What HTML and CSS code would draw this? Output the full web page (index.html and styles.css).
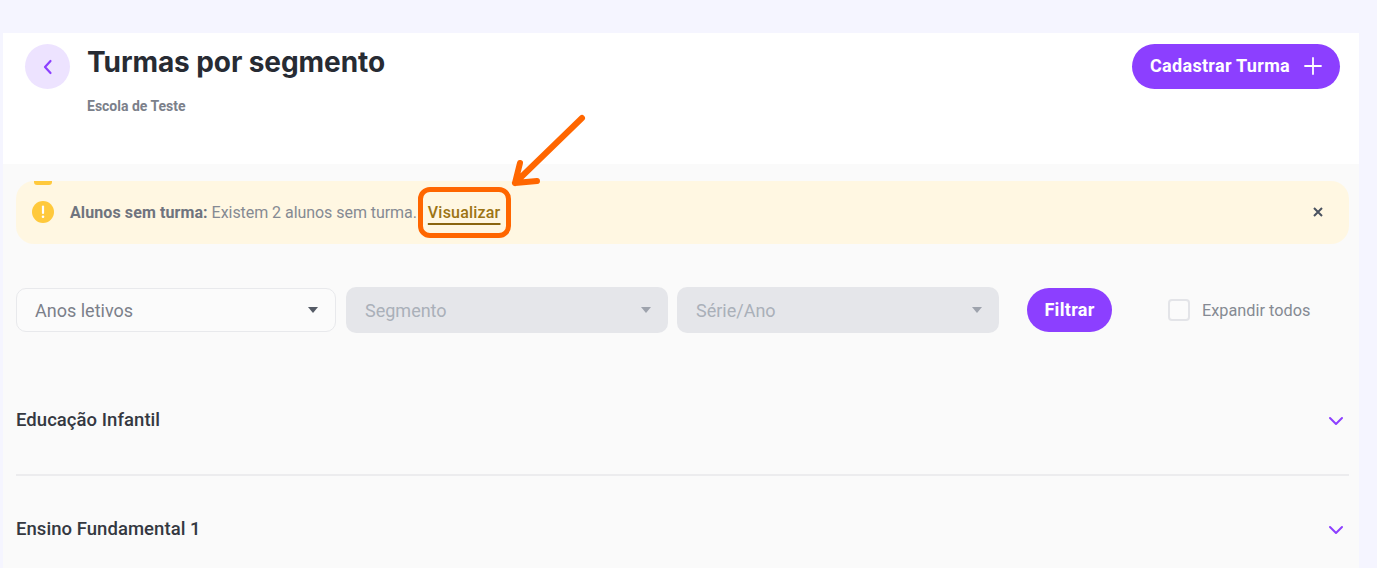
FILE: index.html
```html
<!DOCTYPE html>
<html lang="pt-BR">
<head>
<meta charset="utf-8">
<title>Turmas por segmento</title>
<link rel="stylesheet" href="styles.css">
</head>
<body>
<main class="shell">
  <header class="top">
    <div class="top-left">
      <button class="back" aria-label="Voltar">
        <svg width="12" height="16" viewBox="0 0 12 16"><path d="M8.5 2 L3 8 L8.5 14" fill="none" stroke="#8c3fff" stroke-width="2.2" stroke-linecap="round" stroke-linejoin="round"/></svg>
      </button>
      <div class="titles">
        <h1>Turmas por segmento</h1>
        <p>Escola de Teste</p>
      </div>
    </div>
    <button class="cta">Cadastrar Turma
      <svg width="18" height="18" viewBox="0 0 18 18"><path d="M9 1V17M1 9H17" stroke="#fff" stroke-width="1.8" stroke-linecap="round"/></svg>
    </button>
  </header>
  <section class="content">
    <div class="alert">
      <span class="alert-tab"></span>
      <svg class="alert-icon" width="22" height="22" viewBox="0 0 22 22"><circle cx="11" cy="11" r="11" fill="#ffc93c"/><path d="M11 5.5V12" stroke="#fff" stroke-width="2.2" stroke-linecap="round"/><circle cx="11" cy="15.8" r="1.3" fill="#fff"/></svg>
      <p class="alert-text"><strong>Alunos sem turma:</strong> Existem 2 alunos sem turma. <a class="alert-link" href="#">Visualizar</a></p>
      <svg class="alert-close" width="10" height="10" viewBox="0 0 10 10"><path d="M1 1L9 9M9 1L1 9" stroke="#4a5260" stroke-width="2"/></svg>
    </div>
    <div class="filters">
      <div class="select select-on"><span>Anos letivos</span><i class="caret"></i></div>
      <div class="select select-off"><span>Segmento</span><i class="caret"></i></div>
      <div class="select select-off select-last"><span>Série/Ano</span><i class="caret"></i></div>
      <button class="filter-btn">Filtrar</button>
      <label class="expand"><i class="box"></i>Expandir todos</label>
    </div>
    <div class="accordion">
      <div class="acc-row acc-first"><span>Educação Infantil</span><svg class="chev" width="16" height="10" viewBox="0 0 16 10"><path d="M2 2L8 8L14 2" fill="none" stroke="#8c3fff" stroke-width="2" stroke-linecap="round" stroke-linejoin="round"/></svg></div>
      <div class="acc-row"><span>Ensino Fundamental 1</span><svg class="chev" width="16" height="10" viewBox="0 0 16 10"><path d="M2 2L8 8L14 2" fill="none" stroke="#8c3fff" stroke-width="2" stroke-linecap="round" stroke-linejoin="round"/></svg></div>
    </div>
  </section>
</main>
<div class="mark-box"></div>
<svg class="mark-arrow" width="80" height="76" viewBox="0 0 80 76"><path d="M74 5L7 70M7 70L12 50M7 70L29 68" fill="none" stroke="#ff6600" stroke-width="6" stroke-linecap="round" stroke-linejoin="round"/></svg>
</body>
</html>
```
FILE: styles.css
```css
* { box-sizing: border-box; }
html, body { height: 100%; }
body {
  margin: 0;
  padding: 33px 18px 0 3px;
  background: #f5f5ff;
  font-family: Roboto, "Liberation Sans", sans-serif;
  overflow: hidden;
  position: relative;
}
.shell { background: #fafafa; height: 535px; overflow: hidden; }
.top {
  background: #fff;
  height: 131px;
  padding: 11px 19px 0 22px;
  display: flex;
  justify-content: space-between;
  align-items: flex-start;
}
.top-left { display: flex; gap: 17px; }
.back {
  width: 45px; height: 45px; border: 0; border-radius: 50%;
  background: #ede3ff; display: flex; align-items: center; justify-content: center; padding: 0;
}
.titles h1 {
  margin: 0; font-size: 28px; line-height: 36px; font-weight: 700; color: #272b33;
  font-family: Inter, Roboto, sans-serif; letter-spacing: -0.08px;
}
.titles p { margin: 18px 0 0; font-size: 14px; line-height: 17px; font-weight: 700; color: #7b808a; }
.cta {
  height: 45px; width: 208px; border: 0; border-radius: 23px; background: #8c3fff; color: #fff;
  font: 700 18px Roboto, sans-serif; letter-spacing: 0.3px; display: flex; align-items: center; justify-content: center; gap: 14px; padding: 0 0 2px;
}
.content { padding: 17px 10px 0 13px; }
.alert {
  position: relative; height: 63px; background: #fff7e2; border-radius: 18px;
  display: flex; align-items: center; padding: 0 26px 2px 16px; margin-bottom: 43px;
}
.alert-tab { position: absolute; left: 18px; top: 0; width: 18px; height: 4px; border-radius: 0 0 3px 3px; background: #ffc93c; }
.alert-text { margin: 0 0 0 16px; padding-top: 2px; flex: 1; font-size: 16px; color: #858a93; white-space: nowrap; letter-spacing: -0.05px; }
.alert-text strong { color: #6f747e; font-weight: 700; letter-spacing: 0.1px; }
.alert-link {
  color: #9c7413; font-weight: 500; margin-left: 7px; letter-spacing: 0.2px;
  text-decoration: underline; text-decoration-thickness: 2px; text-underline-offset: 5px; text-decoration-color: #8a6510;
}
.filters { display: flex; align-items: center; height: 46px; }
.select {
  height: 46px; border-radius: 10px; display: flex; align-items: center; justify-content: space-between;
  padding: 0 17px 0 19px; font-size: 18px;
}
.select-on { width: 320px; height: 44px; background: #fbfbfb; border: 1px solid #e8e9ec; color: #7b808a; padding-left: 18px; }
.select-off { width: 322px; margin-left: 10px; background: #e5e6ea; color: #aab0b9; }
.select-last { margin-left: 9px; }
.caret { width: 0; height: 0; border: 5px solid transparent; border-top: 6px solid #555b66; border-bottom: 0; }
.select-off .caret { border-top-color: #9ea3ad; }
.filter-btn {
  width: 85px; height: 44px; margin-left: 28px; margin-bottom: 1px; border: 0; border-radius: 22px; background: #8c3fff; color: #fff;
  font: 700 18px Roboto, sans-serif; letter-spacing: 0.3px; padding: 0 0 1px;
}
.expand { display: flex; align-items: center; margin-left: 56px; font-size: 16.3px; color: #858a93; }
.box { width: 22px; height: 22px; border: 2px solid #e3e4e8; border-radius: 4px; margin-right: 12px; background: #fbfbfb; }
.accordion { margin-top: 33px; }
.acc-row {
  height: 109px; display: flex; align-items: center; justify-content: space-between;
  padding: 0 5px 3px 0; font-size: 18.5px; letter-spacing: 0.05px; font-weight: 500; color: #343841;
  border-bottom: 2px solid #ececee;
}
.acc-row:last-child { border-bottom: 0; }
.acc-first { height: 110px; padding-top: 2px; padding-bottom: 3px; }
.chev { margin-top: 2px; }
.mark-box {
  position: absolute; left: 418px; top: 187px; width: 93px; height: 51px;
  border: 5px solid #ff6600; border-radius: 12px;
}
.mark-arrow { position: absolute; left: 508px; top: 113px; }
```
